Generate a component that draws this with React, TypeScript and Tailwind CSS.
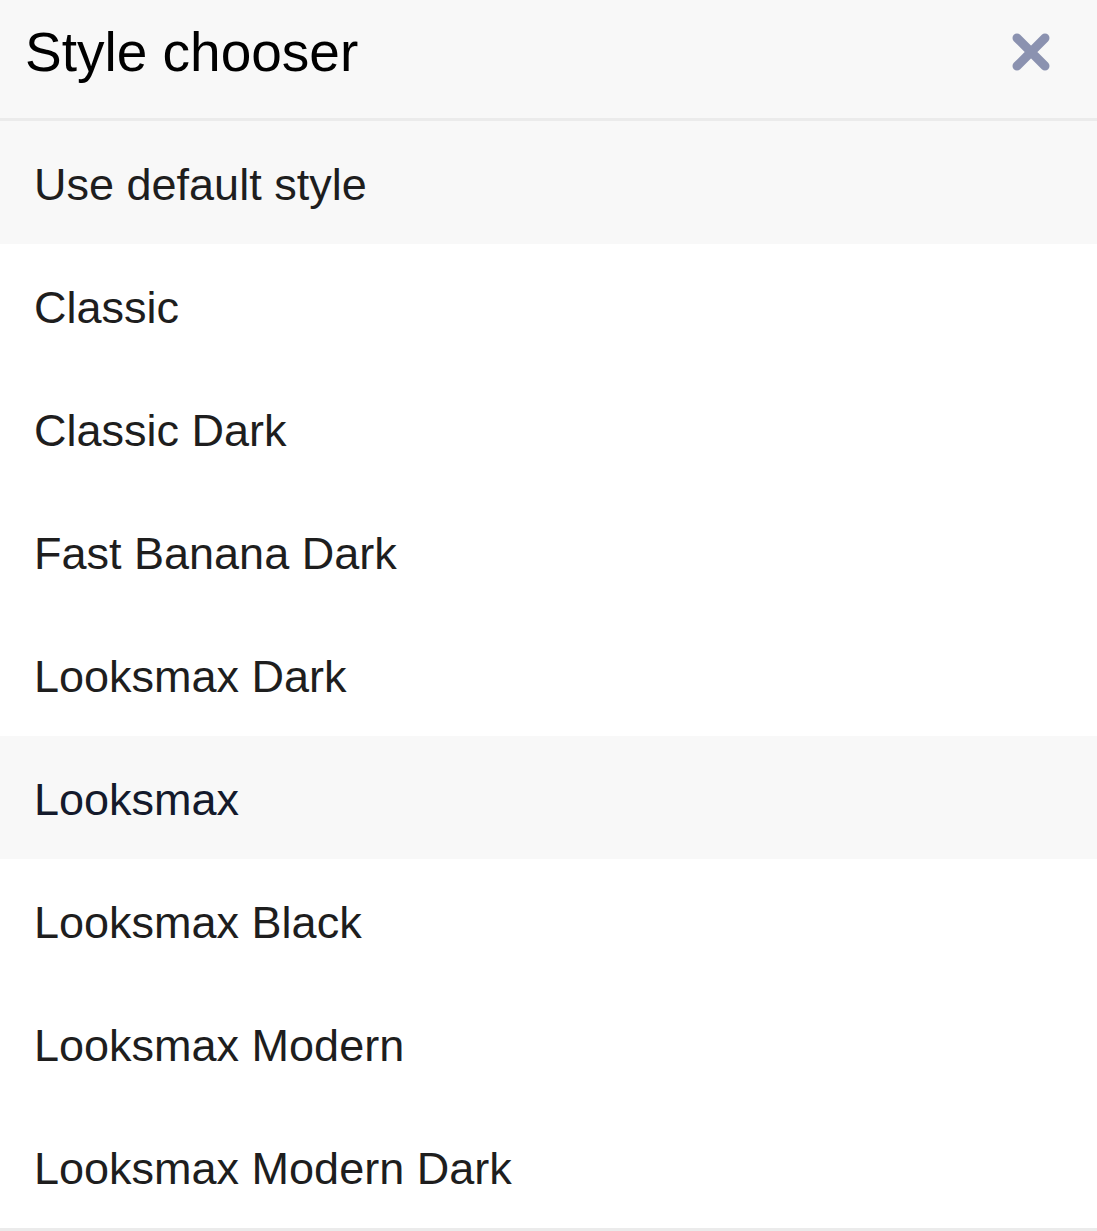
import React from "react";

const items = [
  { label: "Use default style", active: true },
  { label: "Classic" },
  { label: "Classic Dark" },
  { label: "Fast Banana Dark" },
  { label: "Looksmax Dark" },
  { label: "Looksmax", active: true, selected: true },
  { label: "Looksmax Black" },
  { label: "Looksmax Modern" },
  { label: "Looksmax Modern Dark" },
];

export default function App() {
  return (
    <div className="w-[1097px] h-[1231px] bg-white overflow-hidden" style={{ fontFamily: '"Liberation Sans", Arial, sans-serif' }}>
      <div className="h-[118px] bg-[#f8f8f8] flex items-start justify-between pl-[25px] pr-[46px] pt-[22px]">
        <div className="text-[55px] leading-[60px] text-black">Style chooser</div>
        <svg width="40" height="40" viewBox="0 0 40 40" className="mt-[10px]">
          <path d="M6 6 L34 34 M34 6 L6 34" stroke="#8b92b0" strokeWidth="9" strokeLinecap="round" />
        </svg>
      </div>
      <div className="h-[3px] bg-[#ebebeb]" />
      <div className="flex flex-col">
        {items.map((it) => (
          <div
            key={it.label}
            className={`h-[123px] flex items-center pl-[34px] pt-[4px] text-[45px] ${it.active ? "bg-[#f8f8f8]" : "bg-white"} ${it.selected ? "text-[#141a2c]" : "text-[#1e1e1e]"}`}
          >
            {it.label}
          </div>
        ))}
      </div>
      <div className="h-[3px] bg-[#ebebeb]" />
    </div>
  );
}
